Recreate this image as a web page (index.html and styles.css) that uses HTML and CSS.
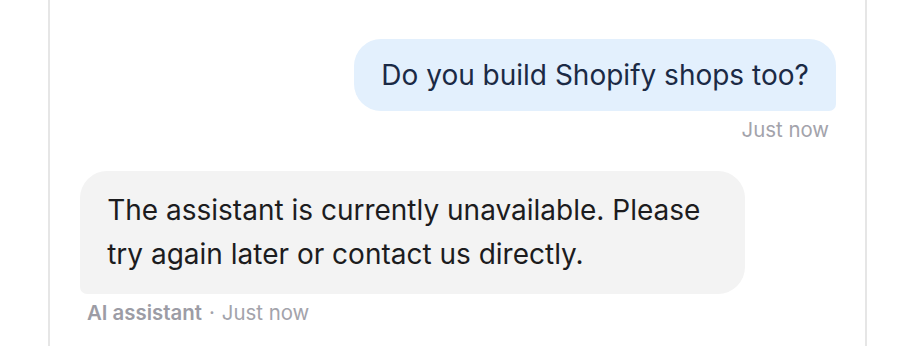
FILE: index.html
```html
<!DOCTYPE html>
<html lang="en">
<head>
<meta charset="utf-8">
<title>Chat</title>
<link rel="stylesheet" href="styles.css">
</head>
<body>
<div class="panel">
  <div class="messages">
    <div class="msg msg-user">
      <div class="bubble bubble-user">Do you build Shopify shops too?</div>
      <div class="meta meta-user">Just now</div>
    </div>
    <div class="msg msg-bot">
      <div class="bubble bubble-bot">The assistant is currently unavailable. Please try again later or contact us directly.</div>
      <div class="meta meta-bot"><span class="who">AI assistant</span><span class="sep">·</span><span>Just now</span></div>
    </div>
  </div>
</div>
</body>
</html>
```
FILE: styles.css
```css
html, body {
  margin: 0;
  padding: 0;
  background: #ffffff;
}
body {
  font-family: Inter, "Noto Sans", sans-serif;
  height: 346px;
  overflow: hidden;
}
.panel {
  margin-left: 48px;
  width: 815px;
  height: 346px;
  border-left: 2px solid #e6e6e6;
  border-right: 2px solid #e6e6e6;
  background: #ffffff;
}
.messages {
  display: flex;
  flex-direction: column;
  gap: 28px;
  padding: 39px 29px 0 30px;
}
.msg {
  display: flex;
  flex-direction: column;
}
.msg-user {
  align-items: flex-end;
}
.msg-bot {
  align-items: flex-start;
}
.bubble {
  font-size: 28px;
  line-height: 44.4px;
  letter-spacing: 0;
}
.bubble-user {
  background: #e3f0fd;
  color: #1b2a45;
  padding: 13.8px 27.2px;
  border-radius: 27px 27px 7px 27px;
}
.bubble-bot {
  background: #f3f3f3;
  color: #1c1c1e;
  padding: 17px 27.2px;
  border-radius: 27px 27px 27px 7px;
  max-width: 665px;
  box-sizing: border-box;
}
.meta {
  margin-top: 5px;
  font-size: 20.4px;
  line-height: 27px;
  color: #a3a3ab;
}
.meta-user {
  padding-right: 7px;
}
.meta-bot {
  padding-left: 7px;
  display: flex;
  align-items: baseline;
}
.who {
  font-weight: 600;
  color: #9c9ca5;
}
.sep {
  margin: 0 7px;
}
```
